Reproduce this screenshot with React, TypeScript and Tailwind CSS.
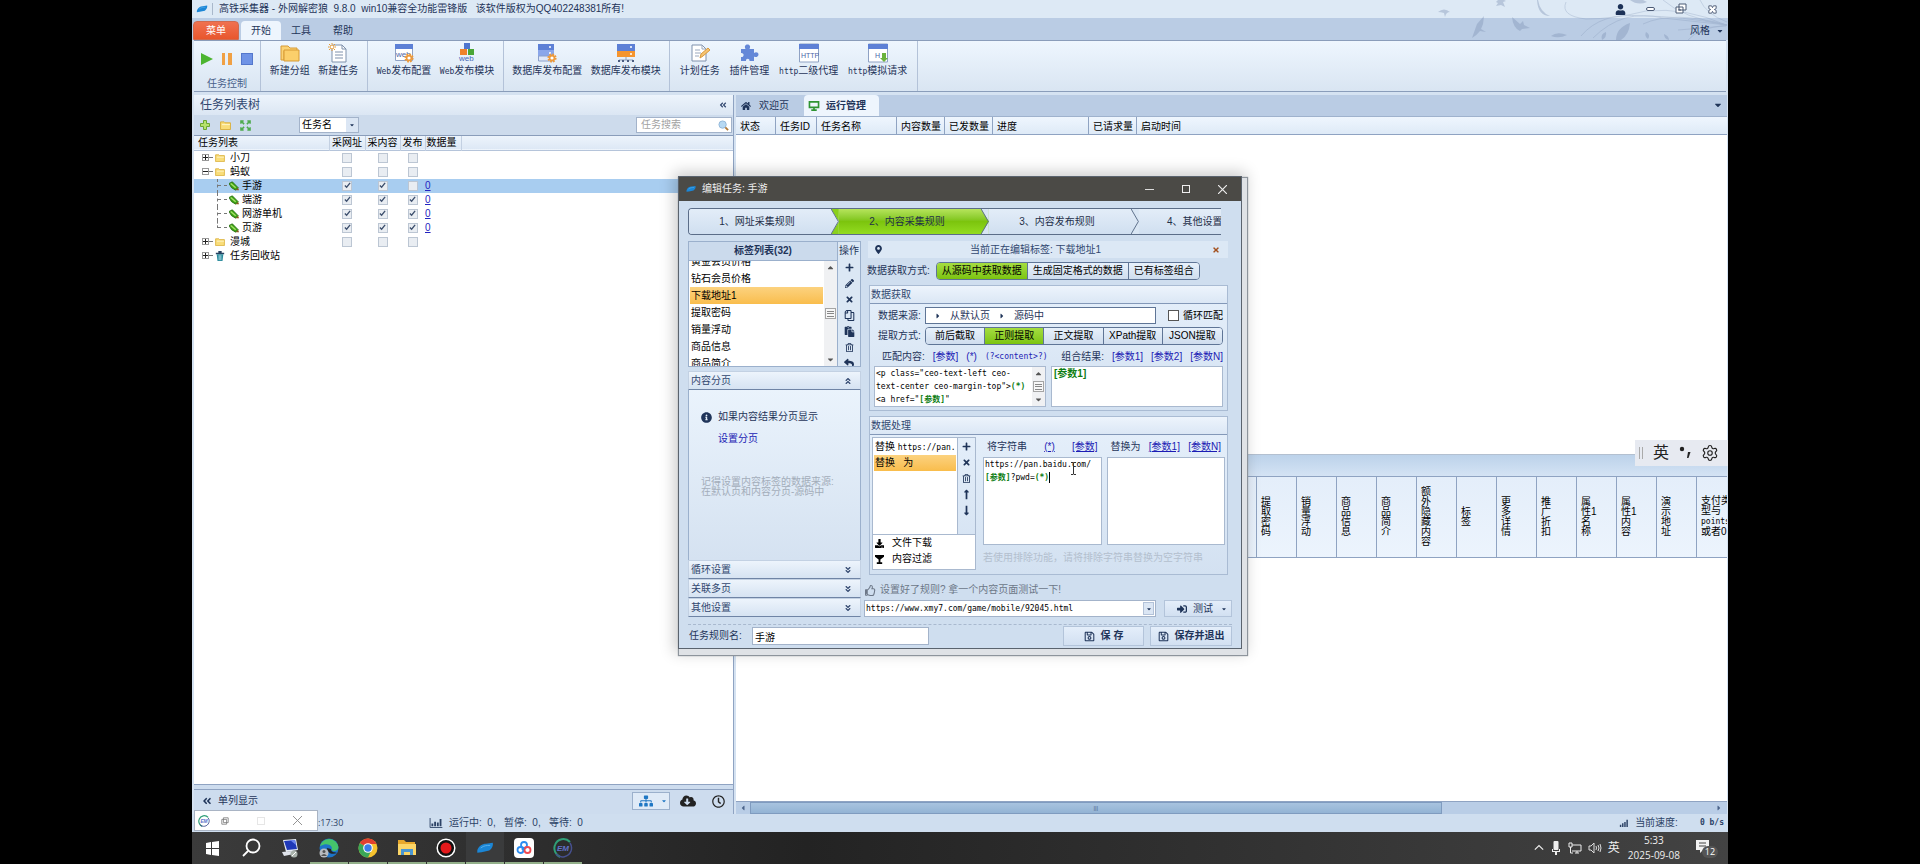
import type { ReactNode } from "react"
import clsx from "clsx"
import {
  FaAngleDoubleDown,
  FaAngleDoubleLeft,
  FaAngleDoubleUp,
  FaCaretDown,
  FaCaretLeft,
  FaCaretRight,
  FaCaretUp,
  FaCloudDownloadAlt,
  FaDownload,
  FaHome,
  FaInfoCircle,
  FaLongArrowAltDown,
  FaLongArrowAltUp,
  FaMapMarkerAlt,
  FaPaste,
  FaPencilAlt,
  FaPlus,
  FaRegClock,
  FaRegCopy,
  FaRegSave,
  FaRegThumbsUp,
  FaRegTrashAlt,
  FaReply,
  FaSignInAlt,
  FaSitemap,
  FaTimes,
  FaUser,
} from "react-icons/fa"
import { Settings } from "lucide-react"

const RIBBON = [
  {
    width: "w-[107px]",
    items: [
      { label: "新建分组", icon: <FolderIcon /> },
      { label: "新建任务", icon: <NewTaskIcon /> },
    ],
  },
  {
    width: "w-[136px]",
    items: [
      { latin: "Web", label: "发布配置", icon: <WebConfigIcon /> },
      { latin: "Web", label: "发布模块", icon: <WebModuleIcon /> },
    ],
  },
  {
    width: "w-[166px]",
    items: [
      { label: "数据库发布配置", icon: <DbConfigIcon /> },
      { label: "数据库发布模块", icon: <DbModuleIcon /> },
    ],
  },
  {
    width: "w-[248px]",
    items: [
      { label: "计划任务", icon: <PlanIcon /> },
      { label: "插件管理", icon: <PuzzleIcon /> },
      { latin: "http", label: "二级代理", icon: <HttpIcon text="HTTP" /> },
      { latin: "http", label: "模拟请求", icon: <HttpIcon text="H" arrow /> },
    ],
  },
]

const TREE = [
  { name: "小刀", kind: "folder", checks: [0, 0, 0] },
  { name: "蚂蚁", kind: "folder", open: true, checks: [0, 0, 0] },
  { name: "手游", kind: "task", checks: [1, 1, 0], count: "0", selected: true },
  { name: "端游", kind: "task", checks: [1, 1, 1], count: "0" },
  { name: "网游单机", kind: "task", checks: [1, 1, 1], count: "0" },
  { name: "页游", kind: "task", checks: [1, 1, 1], count: "0", last: true },
  { name: "漫城", kind: "folder", checks: [0, 0, 0] },
  { name: "任务回收站", kind: "trash", checks: [] },
]

const RUN_COLUMNS = [
  { name: "状态", width: "w-[40px]" },
  { name: "任务ID", width: "w-[41px]" },
  { name: "任务名称", width: "w-[80px]" },
  { name: "内容数量", width: "w-[48px]" },
  { name: "已发数量", width: "w-[48px]" },
  { name: "进度", width: "w-[96px]" },
  { name: "已请求量", width: "w-[48px]" },
]

const DATA_COLUMNS = ["提取密码", "销量浮动", "商品信息", "商品简介", "额外隐藏内容", "标签", "更多详情", "推广折扣"]

const TAGS = ["黄金会员价格", "钻石会员价格", "下载地址1", "提取密码", "销量浮动", "商品信息", "商品简介"]

function M({ children, className }: { children: ReactNode; className?: string }) {
  return <span className={clsx("font-['DejaVu_Sans_Mono',monospace] text-[8px]", className)}>{children}</span>
}

function Logo({ className }: { className?: string }) {
  return (
    <svg viewBox="0 0 20 14" className={className}>
      <path d="M1 10C2 5 7 2 11 2l8-1c1 3-1 7-4 9l-9 2-5 .500z" fill="#1b86d6" />
      <path d="M5 7c4-3 7-3 11-3" stroke="#5db4ef" fill="none" />
    </svg>
  )
}

function FolderIcon() {
  return (
    <svg viewBox="0 0 20 20" className="size-5">
      <path d="M1 3h7l2 2h7v3H4v9H1z" fill="#fbd375" stroke="#d79a35" />
      <path d="M4 7h15v11H4z" fill="#fbcf6b" stroke="#d79a35" />
    </svg>
  )
}

function NewTaskIcon() {
  return (
    <svg viewBox="0 0 20 20" className="size-5" fill="none">
      <path d="M4 2h10l4 4v13H4z" fill="#fff" stroke="#7f91ac" />
      <path d="M14 2v4h4M7 9h8M7 12h8M7 15h8" stroke="#7f91ac" />
      <circle cx="4" cy="4" r="2" fill="#fff" stroke="#e69a35" />
      <path d="M4 0v1M4 7v1M0 4h1M7 4h1M1 1l1 1M6 6l1 1M7 1 6 2M1 7l1-1" stroke="#e69a35" />
    </svg>
  )
}

function Gear({ x, y }: { x: number; y: number }) {
  return (
    <g fill="none" stroke="#ee9a3a" transform={`translate(${x} ${y})`}>
      <circle r="3.6" strokeWidth="2" strokeDasharray="1.7 1.1" />
      <circle r="2.4" fill="#fff" strokeWidth="1.6" />
    </g>
  )
}

function WebConfigIcon() {
  return (
    <svg viewBox="0 0 20 20" className="size-5">
      <path d="M1.500 1.500h17v16h-17z" fill="#fff" stroke="#8fa2c4" />
      <path d="M1 1h18v5H1z" fill="#5d80d6" />
      <text x="2" y="14" fontSize="8" fill="#4b66a8">web</text>
      <Gear x={15} y={15} />
    </svg>
  )
}

function WebModuleIcon() {
  return (
    <svg viewBox="0 0 20 20" className="size-5">
      <path d="M7 0h6v6H7z" fill="#4f76cf" />
      <path d="M3 6h7v6H3z" fill="#f0832b" />
      <path d="M11 6h6v6h-6z" fill="#4aa636" />
      <text x="2" y="18" fontSize="8" fill="#4668b8">web</text>
    </svg>
  )
}

function DbConfigIcon() {
  return (
    <svg viewBox="0 0 20 20" className="size-5">
      <path d="M1 1h16v6H1z" fill="#5d80d6" />
      <path d="M1 7h16v6H1z" fill="#8aa6ea" />
      <path d="M1.500 13h15v5h-15z" fill="#dfe7f8" stroke="#8aa0cc" />
      <path d="M12 4h2M12 10h2" stroke="#fff" strokeWidth="1.500" />
      <Gear x={15} y={15} />
    </svg>
  )
}

function DbModuleIcon() {
  return (
    <svg viewBox="0 0 20 20" className="size-5">
      <path d="M1 1h18v7H1z" fill="#5d80d6" />
      <path d="M1 8h18v6H1z" fill="#f5952f" />
      <path d="M14 4h2M14 11h2" stroke="#fff" strokeWidth="1.500" />
      <path d="M10 14v3M3 17h14" stroke="#8ea0bd" />
      <path d="M2 18h2M6 18h2M11 18h2M16 18h2" stroke="#4a5c80" strokeWidth="2" />
    </svg>
  )
}

function PlanIcon() {
  return (
    <svg viewBox="0 0 20 20" className="size-5" fill="none">
      <path d="M2 2h10l4 4v12H2z" fill="#fff" stroke="#7f91ac" />
      <path d="M5 7h5M5 10h6M5 13h4M12 2v4h4" stroke="#9aa8bd" />
      <path d="m10 15 1-4 7-6 2 2-7 6z" fill="#f6c473" stroke="#d99a3c" />
    </svg>
  )
}

function PuzzleIcon() {
  return (
    <svg viewBox="0 0 20 20" className="size-5">
      <path d="M2 6h4.500C5 3 6.500 1.500 8.500 1.500S12 3 10.500 6H15v4c2-1.500 4.500-.500 4.500 1.500S17 15 15 13.500V18h-4.500c.500-3-4-3-3.500 0H2v-4c3.500.500 3.500-4.500 0-4z" fill="#6488d8" />
    </svg>
  )
}

function HttpIcon({ text, arrow }: { text: string; arrow?: boolean }) {
  return (
    <svg viewBox="0 0 20 20" className="size-5">
      <path d="M.5 1h19v18H.5z" fill="#fff" stroke="#8fa2c4" />
      <path d="M0 1h20v5H0z" fill="#5d80d6" />
      <text x={arrow ? 7 : 2} y="15" fontSize="7" fill="#4b66a8" fontFamily="Liberation Sans">{text}</text>
      {arrow && <path d="M14 10h4v5h2l-4 4-4-4h2z" fill="#6bb33c" />}
    </svg>
  )
}

// birds and twigs in the window's top right corner
function Flourish() {
  return (
    <svg viewBox="0 0 290 40" className="absolute top-0 right-0 h-10 w-[290px]" fill="#7f93b5" opacity="0.4">
      <path d="M0 12q6-5 12 0-4 0-5 5l-1-4q-3-1-6-1zM58 2l4-4 6 3-3 1 2 5-4-2-5 1 2-3z" />
      <path d="m34 38 5-14 7-8-1 8-2 5 5 3-6-1q-3 4-8 7zM74 17l8 7 3-3 1 4 6 3-8 1-2 2q-7-3-8-14z" />
      <path d="M100 0q2 12 12 16-12 0-13-16zM113 36q6-5 16-1-8 4-16 1zM178 40q0-12 14-17-1 12-9 17zM164 40q-2-6 4-8 1 5-4 8zM192 0q8 6 17 2l-4-2zM208 32q5 3 2 7-4-3-2-7zM226 34q5 2 5 6-5-1-5-6z" />
      <g fill="none" stroke="#7f93b5" strokeWidth="0.700">
        <path d="M128 2q-6 14 20 17 28 0 60-8 40-4 80 14M143 36q20-24 60-20 40 0 86 9M155 38q30-30 70-20l64 7M205 24q30-14 84 1M225 0q20 18 64 25M250 40q10-12 39-15M240 30l48-4M262 0q6 14 27 22" />
      </g>
    </svg>
  )
}

function TitleBar() {
  return (
    <header className="relative shrink-0">
      <div className="flex h-[18px] items-center bg-[#dde9f5] pr-2.5 pl-1">
        <Logo className="h-2 w-3" />
        <span className="mr-1.5 ml-1 h-3 w-px bg-[#a9b8cb]" />
        <h1 className="whitespace-pre">
          高铁采集器 - 外网解密狼  9.8.0  win10兼容全功能雷锋版   该软件版权为QQ402248381所有!
        </h1>
        <div className="z-10 ml-auto flex items-center gap-5 text-[#4b5a75]">
          <button aria-label="用户"><FaUser className="size-[11px] text-[#1b3157]" /></button>
          <button aria-label="最小化" className="h-1 w-[9px] rounded-sm border border-[#4b5a75] bg-white" />
          <button aria-label="还原">
            <svg viewBox="0 0 12 12" className="size-3" fill="#fff" stroke="#4b5a75"><path d="M4 1h7v6H4zM1 4h7v6H1zM3 7h3" /></svg>
          </button>
          <button aria-label="关闭">
            <svg viewBox="0 0 12 12" className="size-[11px]" fill="#fff" stroke="#4b5a75"><path d="M2 2h3l1 2 1-2h3v3L8 6l2 1v3H7L6 8l-1 2H2V7l2-1-2-1z" /></svg>
          </button>
        </div>
      </div>
      <nav className="flex h-[22px] items-end bg-[#bacce4] pl-px text-[#1f3459]">
        <button className="h-[19px] w-[46px] rounded-t border border-[#d06a4e] bg-linear-to-b from-[#f0714f] to-[#e8562c] text-white">菜单</button>
        <button className="ml-0.5 h-[19px] w-10 rounded-t bg-[#eef5fd]">开始</button>
        <button className="h-[19px] w-10">工具</button>
        <button className="h-[19px] w-11">帮助</button>
        <button className="z-10 mr-1 ml-auto flex h-[19px] items-center gap-1.5">风格 <FaCaretDown className="size-2" /></button>
      </nav>
      <Flourish />
    </header>
  )
}

function Ribbon() {
  return (
    <div className="mx-0.5 flex h-[52px] shrink-0 border-y border-[#8a9dba] bg-linear-to-b from-[#eef6fe] to-[#d9e5f2] text-[#1f3459]">
      <div className="flex w-[67px] flex-col items-center border-r border-[#b3c2d8] pt-3">
        <div className="flex gap-2">
          <button aria-label="开始任务"><svg viewBox="0 0 12 12" className="size-3"><path d="M0 0l12 6-12 6z" fill="#4cb531" /></svg></button>
          <button aria-label="暂停任务"><svg viewBox="0 0 12 12" className="size-3"><path d="M1 0h3v12H1zM7 0h4v12H7z" fill="#f0a044" /></svg></button>
          <button aria-label="停止任务" className="size-3 border border-[#5477cc] bg-[#6f93e6]" />
        </div>
        <span className="mt-[13px] text-[#48608a]">任务控制</span>
      </div>
      {RIBBON.map((group) => (
        <div key={group.items[0].label + group.width} className={clsx("flex justify-evenly border-r border-[#b3c2d8]", group.width)}>
          {group.items.map((item) => (
            <button key={item.label} className="flex flex-col items-center gap-0.5 self-start pt-0.5 whitespace-nowrap">
              {item.icon}
              <span>{item.latin && <M>{item.latin}</M>}{item.label}</span>
            </button>
          ))}
        </div>
      ))}
    </div>
  )
}

function TreeName({ row }: { row: (typeof TREE)[number] }) {
  if (row.kind === "task") {
    return (
      <span className="flex h-[14px] items-center pl-[23px]">
        <span className={clsx("w-px self-start border-l border-dashed border-[#777]", row.last ? "h-[7px]" : "h-[14px]")} />
        <span className="mr-0.5 w-[9px] border-t border-dashed border-[#777]" />
        <svg viewBox="0 0 12 12" className="mr-[3px] size-[10px]">
          <path d="M0 3l4-2 7 7-3 3-5-3z" fill="#3fa516" stroke="#23690c" />
          <path d="M2 3l6 5" stroke="#a8e06b" strokeWidth="1.500" />
          <path d="m8 11 3-3 1 3z" fill="#8a5b1c" />
        </svg>
        {row.name}
      </span>
    )
  }
  return (
    <span className="flex h-[14px] items-center pl-2">
      <span className="flex size-[7px] items-center justify-center border border-[#999] bg-white">
        <svg viewBox="0 0 5 5" className="size-[5px]" stroke="#222"><path d={row.open ? "M0 2.500h5" : "M0 2.500h5M2.500 0v5"} /></svg>
      </span>
      <span className="mr-0.5 w-1 border-t border-dashed border-[#777]" />
      {row.kind === "folder" ? (
        <svg viewBox="0 0 12 10" className="mr-[5px] h-2 w-[10px]"><path d="M.5 1h4l1 1h6v7.500H.5z" fill="#f9dd7a" stroke="#d9ad35" /><path d="M2 4h9" stroke="#fff6cf" /></svg>
      ) : (
        <svg viewBox="0 0 12 12" className="mr-[5px] size-[10px]"><path d="M1 2h10v2H1zM4 0h4v2H4z" fill="#27415f" /><path d="M2 4h8l-1 8H3z" fill="#2a8a9c" /><path d="M5 5v6M7 5v6" stroke="#bfe6ee" /></svg>
      )}
      {row.name}
    </span>
  )
}

function Check({ on, label }: { on: boolean; label: string }) {
  return (
    <label className="mx-auto flex size-[10px] items-center justify-center border border-[#bcc6d3] bg-[#e9edf2]">
      <input type="checkbox" defaultChecked={on} aria-label={label} className="peer absolute size-[10px] appearance-none" />
      <svg viewBox="0 0 8 8" className="hidden size-[7px] peer-checked:block" fill="none" stroke="#3d4f6d" strokeWidth="1.500"><path d="m1 4 2 2 4-5" /></svg>
    </label>
  )
}

function TaskPanel() {
  const head = "border-r border-[#c3d0e2] font-normal"
  return (
    <aside className="flex w-[540px] shrink-0 flex-col border-r border-[#8fa3c2]">
      <div className="flex h-5 shrink-0 items-center justify-between bg-linear-to-b from-[#edf4fc] to-[#dbe6f3] px-1.5 text-[12px] text-[#31476f]">
        <h2>任务列表树</h2>
        <button aria-label="收起"><FaAngleDoubleLeft className="size-2" /></button>
      </div>
      <div className="flex h-[21px] shrink-0 items-center border-b border-[#8a9dba] bg-[#cddbec] pl-1.5">
        <button aria-label="添加"><svg viewBox="0 0 10 10" className="size-[10px]"><path d="M3.500.5h3v3h3v3h-3v3h-3v-3h-3v-3h3z" fill="#b7e26d" stroke="#6aa832" /></svg></button>
        <button aria-label="文件夹" className="ml-[10px]"><svg viewBox="0 0 12 10" className="h-[9px] w-[11px]"><path d="M.5 1h4l1 1h6v7.500H.5z" fill="#f9dd7a" stroke="#d9ad35" /><path d="M2 4h9" stroke="#fff6cf" /></svg></button>
        <button aria-label="展开" className="ml-[9px]">
          <svg viewBox="0 0 12 12" className="size-[11px]" fill="none" stroke="#4eab4e" strokeWidth="1.600"><path d="M1 4V1h3M8 1h3v3M11 8v3H8M4 11H1V8M1 1l3.500 3.500M11 1 7.500 4.500M11 11 7.500 7.500M1 11l3.500-3.500" /></svg>
        </button>
        <div className="relative ml-12 h-4 w-[60px]">
          <select aria-label="搜索字段" className="size-full appearance-none border border-[#a3b3ca] bg-white pl-0.5 text-black">
            <option>任务名</option>
          </select>
          <span className="pointer-events-none absolute inset-y-px right-px flex w-3 items-center justify-center bg-[#dbe6f4]"><FaCaretDown className="size-1.5" /></span>
        </div>
        <label className="mr-px ml-auto flex h-4 w-24 items-center border border-[#a3b3ca] bg-white pr-0.5">
          <input aria-label="任务搜索" placeholder="任务搜索" className="min-w-0 flex-1 pl-1 placeholder:text-[#a2a2a2]" />
          <svg viewBox="0 0 12 12" className="size-[11px]"><circle cx="5" cy="5" r="4" fill="#b7d9f3" stroke="#8fb5d8" /><path d="m8 8 3 3" stroke="#b0793a" strokeWidth="2" /></svg>
        </label>
      </div>
      <div className="min-h-0 flex-1 bg-white text-black">
        <table className="w-full table-fixed">
          <thead>
            <tr className="h-[14px] border-b border-[#b5c4da] bg-linear-to-b from-[#edf4fc] to-[#dde8f5]">
              <th className={clsx(head, "w-[135px] pl-1 text-left")}>任务列表</th>
              <th className={clsx(head, "w-9")}>采网址</th>
              <th className={clsx(head, "w-[35px]")}>采内容</th>
              <th className={clsx(head, "w-[25px]")}>发布</th>
              <th className={clsx(head, "w-9 pl-px text-left")}>数据量</th>
              <th />
            </tr>
          </thead>
          <tbody>
            {TREE.map((row) => (
              <tr key={row.name} className={clsx("h-[14px]", row.selected && "bg-[#a8cdf0]")}>
                <td className="p-0"><TreeName row={row} /></td>
                {[0, 1, 2].map((i) => (
                  <td key={i} className="p-0">
                    {i < row.checks.length && <Check on={row.checks[i] === 1} label={row.name} />}
                  </td>
                ))}
                <td className="p-0"><a href="#data" className="leading-3 text-[#2424c0] underline">{row.count}</a></td>
                <td />
              </tr>
            ))}
          </tbody>
        </table>
      </div>
      <div className="h-1.5 shrink-0 border-y border-[#8fa3c2] bg-[#cddcee]" />
      <div className="flex h-6 shrink-0 items-center bg-[#cddcee] pb-0.5 pl-2 text-[#1f3459]">
        <button className="flex items-center gap-1.5"><FaAngleDoubleLeft className="size-[10px]" />单列显示</button>
        <button aria-label="结构" className="ml-auto flex h-[18px] w-[38px] items-center justify-between border border-[#9bb0cc] bg-[#dfeaf7] px-1.5 text-[#1f77c4]">
          <FaSitemap className="size-[14px]" />
          <FaCaretDown className="-mr-1 size-1.5" />
        </button>
        <button aria-label="下载" className="ml-2.5 text-[#222]"><FaCloudDownloadAlt className="size-4" /></button>
        <button aria-label="历史" className="mr-2 ml-4 text-[#222]"><FaRegClock className="size-[13px]" /></button>
      </div>
    </aside>
  )
}

function RunPanel() {
  const cell = "shrink-0 border-r border-[#8fa3c2] text-left font-normal"
  return (
    <section className="flex min-w-0 flex-1 flex-col">
      <div className="flex h-[22px] shrink-0 items-end border-b border-[#9fb2cd] bg-[#bacce4] text-[#1f3459]">
        <button className="flex h-[21px] items-center gap-2 px-[5px]"><FaHome className="size-[10px]" />欢迎页</button>
        <button className="ml-2.5 flex h-[21px] w-[75px] items-center gap-1.5 rounded-t bg-[#eef5fd] pl-1 font-bold">
          <svg viewBox="0 0 12 11" className="h-[10px] w-3" fill="none" stroke="#2f9432" strokeWidth="1.800"><path d="M1 1h10v6H1zM6 7v3M3 10h6" /></svg>
          运行管理
        </button>
        <button aria-label="标签列表" className="mr-1 mb-1.5 ml-auto"><FaCaretDown className="size-[10px]" /></button>
      </div>
      <table className="block shrink-0 bg-white text-black">
        <thead className="block">
          <tr className="flex h-[18px] items-stretch border-b border-[#8fa3c2] bg-linear-to-b from-[#eff6fe] to-[#deeaf7] leading-5">
            {RUN_COLUMNS.map((c) => (
              <th key={c.name} className={clsx(cell, c.width, "pl-1 whitespace-nowrap")}>{c.name}</th>
            ))}
            <th className="pl-1 font-normal">启动时间</th>
          </tr>
        </thead>
      </table>
      <div className="min-h-0 flex-[318_1_0%] bg-white" />
      <div className="h-[22px] shrink-0 border-t border-[#b3c0d0] bg-linear-to-b from-[#bcd2ea] to-[#d4e3f4]" />
      <table className="block shrink-0 overflow-hidden border-y border-[#8fa3c2] bg-[#e9f2fc] text-black">
        <thead className="block">
          <tr className="flex h-20 bg-linear-to-b from-[#e4eefa] to-[#ecf4fd]">
            <th className={clsx(cell, "w-[521px]")} aria-label="基本列" />
            {DATA_COLUMNS.map((c) => (
              <th key={c} className={clsx(cell, "flex w-10 items-center pl-1 leading-[10px]")}><span className="w-[10px]">{c}</span></th>
            ))}
            <th className={clsx(cell, "flex w-10 items-center pl-1 leading-[10px]")}><span>属<br />性1<br />名<br />称</span></th>
            <th className={clsx(cell, "flex w-10 items-center pl-1 leading-[10px]")}><span>属<br />性1<br />内<br />容</span></th>
            <th className={clsx(cell, "flex w-10 items-center pl-1 leading-[10px]")}><span className="w-[10px]">演示地址</span></th>
            <th className="flex items-center pl-1 text-left leading-[10px] font-normal whitespace-nowrap"><span>支付类<br />型与<br /><M>points</M><br />或者0</span></th>
          </tr>
        </thead>
      </table>
      <div className="min-h-0 flex-[243_1_0%] bg-white" />
      <div className="flex h-[13px] shrink-0 items-center border-t border-[#8fa3c2] bg-[#b9cde6] text-[#4a6389]">
        <span className="flex w-3.5 justify-center"><FaCaretLeft className="size-2" /></span>
        <div className="flex h-full w-[69.8%] items-center justify-center border border-[#7f9bbf] bg-linear-to-b from-[#a8c3df] to-[#93b3d4] text-[6px]">|||</div>
        <span className="mr-1 ml-auto"><FaCaretRight className="size-2" /></span>
      </div>
    </section>
  )
}

function Bars({ className }: { className?: string }) {
  return (
    <svg viewBox="0 0 14 11" className={className} stroke="#2c4266" strokeWidth="2" fill="none">
      <path d="M3 11V8M6 11V6M9 11V4M12 11V1" />
    </svg>
  )
}

function StatusBar() {
  return (
    <footer className="relative flex h-[18px] shrink-0 items-center bg-[#cfdeef] text-[#2c4266]">
      <span className="ml-[126px] font-['Open_Sans'] text-[9px]">:17:30</span>
      <span className="absolute left-[237px] flex items-center gap-1.5 whitespace-pre">
        <svg viewBox="0 0 14 11" className="h-[10px] w-[14px]" stroke="#2c4266" fill="none"><path d="M.5 0v10.500H14" /><path d="M3 9V6M6 9V4M9 9V5M12 9V1" strokeWidth="2" /></svg>
        运行中:  0,   暂停:  0,   等待:  0
      </span>
      <span className="mr-1 ml-auto flex items-center gap-1.5">
        <Bars className="h-2 w-[11px]" />
        当前速度:
        <M className="ml-4 font-bold">0 b/s</M>
      </span>
      <div className="absolute bottom-px left-0.5 flex h-[21px] w-[124px] items-center border border-[#a9b4c4] bg-white pl-[3px]">
        <EmLogo className="size-3" />
        <button aria-label="还原" className="ml-[11px]"><svg viewBox="0 0 10 10" className="size-2" fill="#fff" stroke="#777"><path d="M3 1h6v6H3zM1 3h6v6H1z" /></svg></button>
        <button aria-label="最大化" className="ml-7 size-2 border border-[#e6e6e6]" />
        <button aria-label="关闭" className="ml-7"><svg viewBox="0 0 10 10" className="size-[9px]" stroke="#888"><path d="m0 0 10 10M10 0 0 10" /></svg></button>
      </div>
    </footer>
  )
}

function EmLogo({ className }: { className?: string }) {
  return (
    <svg viewBox="0 0 20 20" className={className} fill="none">
      <path d="M17 4A9 9 0 0 0 2 7c-2 5 1 10 5 12" stroke="#2f9f78" strokeWidth="2" />
      <path d="M3 16a9 9 0 0 0 15-3c1-3 1-5-1-8" stroke="#46508f" strokeWidth="1.500" />
      <text x="4" y="13" fontSize="8" fontWeight="700" fontStyle="italic" fill="#6272c9" fontFamily="Liberation Sans">EM</text>
    </svg>
  )
}

function TaskIcon({ name }: { name: string }) {
  switch (name) {
    case "开始":
      return <svg viewBox="0 0 20 20" className="size-5" fill="#fff"><path d="M4 5l5-1v6H4zM10 4l7-1v7h-7zM4 11h5v6l-5-1zM10 11h7v7l-7-1z" /></svg>
    case "搜索":
      return <svg viewBox="0 0 20 20" className="size-5" fill="none" stroke="#fff" strokeWidth="1.800"><circle cx="12" cy="8" r="6.500" /><path d="m7 13-5 5" /></svg>
    case "远程":
      return <svg viewBox="0 0 20 20" className="size-5"><path d="M3 2l13-1 2 11-12 2z" fill="#e6ecf5" /><path d="M4 3l11-1 2 9-10 1z" fill="#1f39b9" /><path d="M10 2l5 0 1 5z" fill="#6a84ee" /><path d="M2 14l10-1 2 3-10 2z" fill="#dfe3ea" /><circle cx="14" cy="16" r="3.500" fill="#a9b2ac" /><path d="m12 18 4-4" stroke="#fff" /></svg>
    case "Edge":
      return <svg viewBox="0 0 20 20" className="size-5"><circle cx="10" cy="10" r="9.500" fill="#1e74c8" /><path d="M1 8A9.500 9.500 0 0 1 19.500 9c0 4-5 5-7 3 2-4-4-8-11-4z" fill="#45c46b" /><path d="M8 10c0 5 5 7 10 5-1-1-6 0-6-4z" fill="#242424" /><circle cx="5" cy="15" r="4.500" fill="#b9bcc0" /><circle cx="5" cy="13.500" r="1.500" fill="#555" /><path d="M2 18q3-4 6 0z" fill="#555" /></svg>
    case "Chrome":
      return <svg viewBox="0 0 20 20" className="size-5"><circle cx="10" cy="10" r="9.500" fill="#f6c22e" /><path d="M10 10 1.800 5.200A9.500 9.500 0 0 1 18.500 6H10z" fill="#e2402f" /><path d="M1.800 5.200A9.500 9.500 0 0 0 10 19.500L13.500 12 10 10z" fill="#3aa757" /><circle cx="10" cy="10" r="4.800" fill="#fff" /><circle cx="10" cy="10" r="3.700" fill="#3b7de8" /></svg>
    case "资源管理器":
      return <svg viewBox="0 0 20 20" className="size-5"><path d="M1 2h6l2 2h9v3H1z" fill="#e8a92c" /><path d="M1 6h18v11H1z" fill="#fcd667" /><path d="M4 11h12v6h-3v-3H7v3H4z" fill="#4b97d2" /></svg>
    case "录制":
      return <svg viewBox="0 0 20 20" className="size-5"><circle cx="10" cy="10" r="8.800" fill="#111" stroke="#fff" strokeWidth="1.500" /><circle cx="10" cy="10" r="5.500" fill="#e3191b" /></svg>
    case "采集器":
      return <Logo className="h-3 w-[18px]" />
    case "网盘":
      return <svg viewBox="0 0 20 20" className="size-5" fill="none" strokeWidth="1.800"><rect width="20" height="20" rx="4" fill="#fff" /><circle cx="10" cy="7" r="3" stroke="#2a8cf0" /><circle cx="6.500" cy="12" r="3" stroke="#2a8cf0" /><circle cx="13.500" cy="12" r="3" stroke="#ef4950" /><path d="M10 10l-2 2" stroke="#2a8cf0" /></svg>
    default:
      return <EmLogo className="size-5" />
  }
}

const TASKBAR = [
  { name: "开始" },
  { name: "搜索" },
  { name: "远程" },
  { name: "Edge", running: true },
  { name: "Chrome", running: true },
  { name: "资源管理器", running: true },
  { name: "录制", running: true },
  { name: "采集器", running: true, active: true },
  { name: "网盘", running: true },
  { name: "EM", running: true },
]

function Taskbar() {
  return (
    <div className="flex h-8 shrink-0 items-center bg-linear-to-r from-[#3b3b3b] via-[#232323] via-40% to-[#434343] pl-px text-[#eee]">
      {TASKBAR.map((t) => (
        <button
          key={t.name}
          aria-label={t.name}
          className={clsx("mr-px flex h-8 w-[38px] items-center justify-center border-b-2 pt-0.5", t.running ? "border-[#93b08a]" : "border-transparent", t.active && "bg-[#3a3b3c]")}
        >
          <TaskIcon name={t.name} />
        </button>
      ))}
      <div className="mr-2.5 ml-auto flex items-center gap-1.5">
        <svg viewBox="0 0 12 12" className="size-[10px]" fill="none" stroke="#eee" strokeWidth="1.400"><path d="m1 8 5-5 5 5" /></svg>
        <svg viewBox="0 0 12 14" className="h-[14px] w-3" fill="#eee"><rect x="3.500" width="5" height="9" rx="1" /><path d="M2 8v3h8V8H9v2H3V8zM5 11h2v3H5z" /></svg>
        <svg viewBox="0 0 14 12" className="h-3 w-[14px]" fill="none" stroke="#eee"><path d="M4 3h9v6H4M7 11h4M9 9v2M1 1h3v4H1zM2.500 5v6H5" /></svg>
        <svg viewBox="0 0 14 12" className="h-3 w-[14px]" fill="none" stroke="#ddd"><path d="M1 4h2l3-3v10L3 8H1zM8 4q1 2 0 4M10 3q2 3 0 6M12 2q2 4 0 8" /></svg>
        <span className="text-[12px]">英</span>
        <div className="mx-0.5 text-center font-['Open_Sans'] text-[10px] leading-[15px]">
          <div>5:33</div>
          <div>2025-09-08</div>
        </div>
        <button aria-label="通知" className="relative ml-2 h-5 w-[22px]">
          <svg viewBox="0 0 14 14" className="absolute top-0.5 left-0 size-[14px]"><path d="M0 0h13v10H7l-3 3v-3H0z" fill="#f2f2f2" /><path d="M3 3h7M3 6h7" stroke="#444" /></svg>
          <span className="absolute right-0 bottom-0 flex h-3 w-4 items-center justify-center rounded-full bg-[#555] font-['Open_Sans'] text-[9px] text-white">12</span>
        </button>
      </div>
    </div>
  )
}

const STEPS = ["1、网址采集规则", "2、内容采集规则", "3、内容发布规则", "4、其他设置"]

function Steps({ current }: { current: number }) {
  return (
    <nav className="mr-[11px] flex h-[27px] overflow-hidden rounded-l-sm border border-r-0 border-[#5b6d88] bg-[#d9e6f4]">
      {STEPS.map((step, i) => (
        <button
          key={step}
          className={clsx(
            "flex w-[150px] shrink-0 items-center whitespace-nowrap text-[#1f2f49]",
            i === current ? "bg-linear-to-b from-[#b6e45a] via-[#7cc40d] to-[#93dc1f]" : "bg-linear-to-b from-[#e3edf8] to-[#d0dff0]",
          )}
        >
          <span className={clsx("flex-1", i === 3 ? "pl-7 text-left" : "pr-1.5 text-center")}>{step}</span>
          <svg viewBox="0 0 8 26" className="h-full w-2 shrink-0" stroke="#5b6d88">
            <path d="M0 0h8v26H0l8-13z" stroke="none" fill={i + 1 === current ? "#8bd01c" : "#d9e6f4"} />
            <path d="m0 0 7.500 13L0 26" fill="none" />
          </svg>
        </button>
      ))}
    </nav>
  )
}

function TagList() {
  const tools = [
    { label: "添加", icon: <FaPlus className="size-[9px]" /> },
    { label: "编辑", icon: <FaPencilAlt className="size-[9px]" /> },
    { label: "删除", icon: <FaTimes className="size-[9px]" /> },
    { label: "复制", icon: <FaRegCopy className="size-[11px] -scale-x-100" /> },
    { label: "粘贴", icon: <FaPaste className="size-[11px]" /> },
    { label: "清空", icon: <FaRegTrashAlt className="size-[9px]" /> },
    { label: "撤销", icon: <FaReply className="size-[10px]" /> },
  ]
  return (
    <div className="flex h-[126px] border border-[#9bb0cc] bg-[#dbe7f4]">
      <div className="flex min-w-0 flex-1 flex-col border-r border-[#9bb0cc]">
        <h3 className="h-[18px] shrink-0 bg-[#cbdaec] text-center leading-[18px] font-bold">标签列表(32)</h3>
        <div className="flex min-h-0 flex-1 border-t border-[#9bb0cc] bg-white text-black">
          <div className="min-w-0 flex-1 overflow-hidden">
            <ul className="-mt-2">
              {TAGS.map((tag) => (
                <li key={tag} className={clsx("mx-px h-[17px] pl-px leading-[17px]", tag === "下载地址1" && "bg-linear-to-b from-[#fcd27e] to-[#f9bd4b]")}>{tag}</li>
              ))}
            </ul>
          </div>
          <ScrollBar />
        </div>
      </div>
      <div className="flex w-[22px] flex-col items-center overflow-hidden text-[#1f3459]">
        <span className="mb-0.5 h-[15px] leading-[18px]">操作</span>
        {tools.map((t) => (
          <button key={t.label} aria-label={t.label} className="flex h-4 shrink-0 items-center">{t.icon}</button>
        ))}
      </div>
    </div>
  )
}

function ScrollBar() {
  return (
    <div className="flex w-[13px] shrink-0 flex-col items-center justify-between bg-[#f0f1f3] py-0.5 text-[#555]">
      <FaCaretUp className="size-[9px]" />
      <span className="flex h-[11px] w-[11px] flex-col items-center justify-evenly border border-[#a5a5a5] bg-[#f7f7f7]">
        <i className="h-px w-[7px] bg-[#888]" />
        <i className="h-px w-[7px] bg-[#888]" />
        <i className="h-px w-[7px] bg-[#888]" />
      </span>
      <FaCaretDown className="size-[9px]" />
    </div>
  )
}

function FoldHeader({ title, open }: { title: string; open?: boolean }) {
  return (
    <button className="flex h-[19px] w-full items-center justify-between border border-[#c3d1e3] border-b-[#6f84a5] bg-linear-to-b from-[#edf4fc] to-[#d6e3f2] px-0.5 pr-2 text-[#31476f]">
      {title}
      {open ? <FaAngleDoubleUp className="size-2" /> : <FaAngleDoubleDown className="size-2" />}
    </button>
  )
}

function Segments({ items, active, className }: { items: string[]; active: number; className: string }) {
  return (
    <div className={clsx("h-[18px] overflow-hidden rounded-sm border border-[#5f7596] text-black", className)}>
      {items.map((item, i) => (
        <button
          key={item}
          className={clsx(
            "border-r border-[#5f7596] px-[5px] whitespace-nowrap last:border-r-0",
            i === active ? "bg-linear-to-b from-[#a5dd3f] to-[#7cc40d]" : "bg-linear-to-b from-[#e8f1fb] to-[#cfddee]",
          )}
        >
          {item}
        </button>
      ))}
    </div>
  )
}

function Group({ title, children }: { title: string; children: ReactNode }) {
  return (
    <section className="mr-1 ml-[5px] border border-[#a9bbd3] bg-linear-to-b from-[#e6f0fb] to-[#d3e1f1]">
      <h3 className="h-[18px] border-b border-[#8398b8] bg-linear-to-b from-[#edf4fc] to-[#dbe7f5] pl-px leading-[17px] text-[#31476f]">{title}</h3>
      {children}
    </section>
  )
}

function Param({ children, line }: { children: string; line?: boolean }) {
  return <button className={clsx("whitespace-nowrap text-[#1c1cb4]", line && "underline")}>{children}</button>
}

function Green({ children }: { children: ReactNode }) {
  return <b className="text-[#0d7d12]">{children}</b>
}

function FetchGroup() {
  return (
    <Group title="数据获取">
      <div className="px-1 pt-[3px] pb-[3px]">
        <div className="flex items-center">
          <span className="w-[51px] pl-1">数据来源:</span>
          <div className="flex h-[17px] w-[231px] items-center gap-2 border border-[#5f7596] bg-white pl-2">
            <FaCaretRight className="size-2" />从默认页<FaCaretRight className="size-2" />源码中
          </div>
          <label className="ml-auto flex items-center gap-1 text-black">
            <input type="checkbox" className="size-[11px] appearance-none border border-[#555] bg-white checked:bg-[#444]" />
            循环匹配
          </label>
        </div>
        <div className="mt-[3px] flex items-center">
          <span className="w-[51px] pl-1">提取方式:</span>
          <Segments items={["前后截取", "正则提取", "正文提取", "XPath提取", "JSON提取"]} active={1} className="grid flex-1 grid-cols-5" />
        </div>
        <div className="mt-1 flex h-[15px] items-center gap-2 pl-2">
          <span>匹配内容:</span>
          <Param>[参数]</Param>
          <Param>(*)</Param>
          <button className="text-[#1c1cb4]"><M>{"(?<content>?)"}</M></button>
          <span className="ml-auto">组合结果:</span>
          <Param>[参数1]</Param>
          <Param>[参数2]</Param>
          <Param>[参数N]</Param>
        </div>
        <div className="mt-0.5 grid h-[41px] grid-cols-2 gap-[5px] text-black">
          <div className="flex min-w-0 border border-[#a9b9cf] bg-white">
            <div role="textbox" aria-label="匹配内容" contentEditable suppressContentEditableWarning className="min-w-0 flex-1 pl-px font-['DejaVu_Sans_Mono','Noto_Sans_CJK_SC',monospace] text-[8px] leading-[13px] whitespace-nowrap">
              {'<p class="ceo-text-left ceo-'}<br />
              {'text-center ceo-margin-top">'}<Green>(*)</Green><br />
              {'<a href="'}<Green>[参数]</Green>{'"'}
            </div>
            <ScrollBar />
          </div>
          <textarea aria-label="组合结果" defaultValue="[参数1]" className="resize-none border border-[#a9b9cf] bg-white pl-0.5 leading-[13px] font-bold text-[#0d7d12]" />
        </div>
      </div>
    </Group>
  )
}

function ProcessGroup() {
  return (
    <Group title="数据处理">
      <div className="flex gap-[7px] px-0.5 pt-0.5 pb-1">
        <div className="w-[104px] shrink-0 border border-[#a9b9cf] text-black">
          <div className="flex h-24">
            <ul className="w-[85px] overflow-hidden border-r border-[#a9b9cf] bg-white whitespace-pre">
              <li className="h-[17px] pl-0.5 leading-[17px]">替换 <M>https://pan.</M></li>
              <li className="mx-px h-4 bg-linear-to-b from-[#fcd27e] to-[#f9bd4b] px-px leading-4">替换   为</li>
            </ul>
            <div className="flex flex-1 flex-col items-center text-[#1f3459]">
              <button aria-label="添加" className="flex h-4 items-center"><FaPlus className="size-[9px]" /></button>
              <button aria-label="删除" className="flex h-4 items-center"><FaTimes className="size-[9px]" /></button>
              <button aria-label="清空" className="flex h-4 items-center"><FaRegTrashAlt className="size-[9px]" /></button>
              <button aria-label="上移" className="flex h-4 items-center"><FaLongArrowAltUp className="size-[11px]" /></button>
              <button aria-label="下移" className="flex h-4 items-center"><FaLongArrowAltDown className="size-[11px]" /></button>
            </div>
          </div>
          <div className="flex flex-col gap-1 border-t border-[#a9b9cf] bg-white py-0.5 pb-1 pl-0.5">
            <button className="flex items-center gap-2"><FaDownload className="size-[9px]" />文件下载</button>
            <button className="flex items-center gap-2">
              <svg viewBox="0 0 10 10" className="size-[9px]"><path d="M0 0h10v2L6 5v3h2v2H2V8h2V5L0 2z" /></svg>
              内容过滤
            </button>
          </div>
        </div>
        <div className="min-w-0 flex-1">
          <div className="grid grid-cols-2 gap-x-[5px]">
            <div className="flex h-5 items-center justify-between pr-1 pl-1">
              <span>将字符串</span>
              <Param line>(*)</Param>
              <Param line>[参数]</Param>
            </div>
            <div className="flex h-5 items-center justify-between pr-1 pl-1">
              <span>替换为</span>
              <Param line>[参数1]</Param>
              <Param line>[参数N]</Param>
            </div>
            <div role="textbox" aria-label="将字符串" contentEditable suppressContentEditableWarning className="h-[88px] border border-[#a9b9cf] bg-white px-px font-['DejaVu_Sans_Mono','Noto_Sans_CJK_SC',monospace] text-[8px] leading-[13px] text-black">
              https://pan.baidu.com/<br />
              <Green>[参数]</Green>?pwd=<Green>(*)</Green>
              <span className="inline-block h-[11px] w-px bg-black align-middle" />
            </div>
            <textarea aria-label="替换为" className="h-[88px] resize-none border border-[#a9b9cf] bg-white" />
          </div>
          <p className="mt-[7px] text-[#b3bfce]">若使用排除功能，请将排除字符串替换为空字符串</p>
        </div>
      </div>
    </Group>
  )
}

function EditDialog() {
  return (
    <div role="dialog" aria-label="编辑任务" className="absolute top-[176px] left-[486px] w-[564px] border border-[#5a636e] bg-[#cfdeef] text-[#1f3459] shadow-[3px_4px_0_2px_#dfe2e6,3px_4px_1px_3px_#8d949c,0_0_14px_4px_rgba(0,0,0,0.2)]">
      <header className="flex h-6 items-center gap-1.5 bg-[#4b4a46] pr-3.5 pl-[7px] text-[#eee]">
        <Logo className="h-2 w-[10px]" />
        <h2>编辑任务:  手游</h2>
        <div className="ml-auto flex items-center gap-7">
          <button aria-label="最小化"><svg viewBox="0 0 10 10" className="size-[9px]" stroke="#eee"><path d="M0 5h10" /></svg></button>
          <button aria-label="最大化" className="size-2 border border-[#eee]" />
          <button aria-label="关闭"><svg viewBox="0 0 10 10" className="size-[9px]" stroke="#eee" strokeWidth="1.300"><path d="m0 0 10 10M10 0 0 10" /></svg></button>
        </div>
      </header>
      <div className="px-[9px] pt-[7px] pb-0.5">
        <Steps current={1} />
        <div className="mt-1.5 flex gap-[3px]">
          <div className="flex w-[173px] shrink-0 flex-col">
            <TagList />
            <div className="mt-1"><FoldHeader title="内容分页" open /></div>
            <div className="flex-1 border-x border-[#9bb0cc] bg-linear-to-b from-[#eaf3fc] to-[#d5e2f1] pt-[21px] pl-3">
              <p className="flex items-center gap-1.5"><FaInfoCircle className="size-[11px] shrink-0" />如果内容结果分页显示</p>
              <a href="#paging" className="mt-[10px] ml-[17px] block text-[#1c1cb4]">设置分页</a>
              <p className="mt-8 leading-[10px] whitespace-nowrap text-[#a3adba]">记得设置内容标签的数据来源:<br />在默认页和内容分页-源码中</p>
            </div>
            <FoldHeader title="循环设置" />
            <FoldHeader title="关联多页" />
            <FoldHeader title="其他设置" />
          </div>
          <div className="min-w-0 flex-1">
            <div className="mr-1 ml-1 flex h-[17px] items-center justify-between bg-[#dce8f5] pr-2 pl-1.5 text-[#31476f]">
              <FaMapMarkerAlt className="size-[9px] text-[#1f3459]" />
              <span className="mr-6">当前正在编辑标签: 下载地址1</span>
              <button aria-label="关闭"><FaTimes className="size-2 text-[#a3501e]" /></button>
            </div>
            <div className="mt-1 mb-[5px] flex items-center gap-1.5 pl-[3px]">
              <span>数据获取方式:</span>
              <Segments items={["从源码中获取数据", "生成固定格式的数据", "已有标签组合"]} active={0} className="flex" />
            </div>
            <FetchGroup />
            <div className="h-[5px]" />
            <ProcessGroup />
            <p className="mt-[9px] flex items-center gap-1 pl-px text-[#6c7787]"><FaRegThumbsUp className="size-[11px]" />设置好了规则?  拿一个内容页面测试一下!</p>
            <div className="mt-1 flex h-[17px] gap-2">
              <label className="flex w-[292px] border border-[#a3b3ca] bg-white p-px">
                <input aria-label="测试地址" defaultValue="https://www.xmy7.com/game/mobile/92045.html" className="min-w-0 flex-1 font-['DejaVu_Sans_Mono',monospace] text-[8px] text-black" />
                <span className="flex w-[11px] items-center justify-center border border-[#b3c2d8] bg-[#dbe6f4]"><FaCaretDown className="size-1.5" /></span>
              </label>
              <button className="flex flex-1 items-center gap-1.5 border border-[#b3c4da] bg-linear-to-b from-[#e4eefa] to-[#d2e0f1] pr-1 pl-3">
                <FaSignInAlt className="size-[10px]" />测试<FaCaretDown className="ml-auto size-1.5" />
              </button>
            </div>
          </div>
        </div>
        <div className="mt-[7px] flex items-center border-t border-dashed border-[#a9b9cf] pt-px">
          <label htmlFor="rule" className="w-16 pl-px">任务规则名:</label>
          <input id="rule" defaultValue="手游" className="h-[18px] w-[177px] border border-[#a3b3ca] bg-white pl-0.5 text-black" />
          <button className="ml-auto flex h-5 w-[81px] items-center justify-center gap-1.5 border border-[#b3c4da] bg-linear-to-b from-[#e4eefa] to-[#d2e0f1] font-bold"><FaRegSave className="size-[11px]" />保 存</button>
          <button className="ml-1.5 flex h-5 w-[82px] items-center justify-center gap-1.5 border border-[#b3c4da] bg-linear-to-b from-[#e4eefa] to-[#d2e0f1] font-bold"><FaRegSave className="size-[11px]" />保存并退出</button>
        </div>
      </div>
      {/* text cursor */}
      <svg viewBox="0 0 7 13" className="pointer-events-none absolute top-[285px] left-[391px] h-[13px] w-[7px]" fill="none" stroke="#333"><path d="M1 .5h2l.500.500.500-.500h2M3.500 1v11M1 12.500h2l.500-.500.500.500h2" /></svg>
    </div>
  )
}

function ImeBar() {
  return (
    <div className="absolute top-[440px] right-0 flex h-[26px] w-[93px] items-center gap-2.5 bg-[#e7eaf1] pl-1 text-[16px] text-[#222]">
      <span className="h-3 w-1 border-x border-[#aaa]" />
      英
      <svg viewBox="0 0 12 14" className="h-3.5 w-3" fill="#222"><circle cx="3" cy="3" r="2.200" /><path d="M9 6h2.500l-2 6H8z" /></svg>
      <Settings className="size-[18px]" strokeWidth={1.5} />
    </div>
  )
}

export default function App() {
  return (
    <div className="flex h-screen justify-center overflow-hidden bg-black">
      <div className="relative flex aspect-video h-full flex-col overflow-hidden bg-[#d5e2f1] font-['Liberation_Sans','Noto_Sans_CJK_SC',sans-serif] text-[10px] leading-3 text-[#1f3459]">
        <TitleBar />
        <Ribbon />
        <main className="flex min-h-0 flex-1 gap-0.5 pt-[3px] pr-px pl-0.5">
          <TaskPanel />
          <RunPanel />
        </main>
        <StatusBar />
        <Taskbar />
        <EditDialog />
        <ImeBar />
      </div>
    </div>
  )
}
